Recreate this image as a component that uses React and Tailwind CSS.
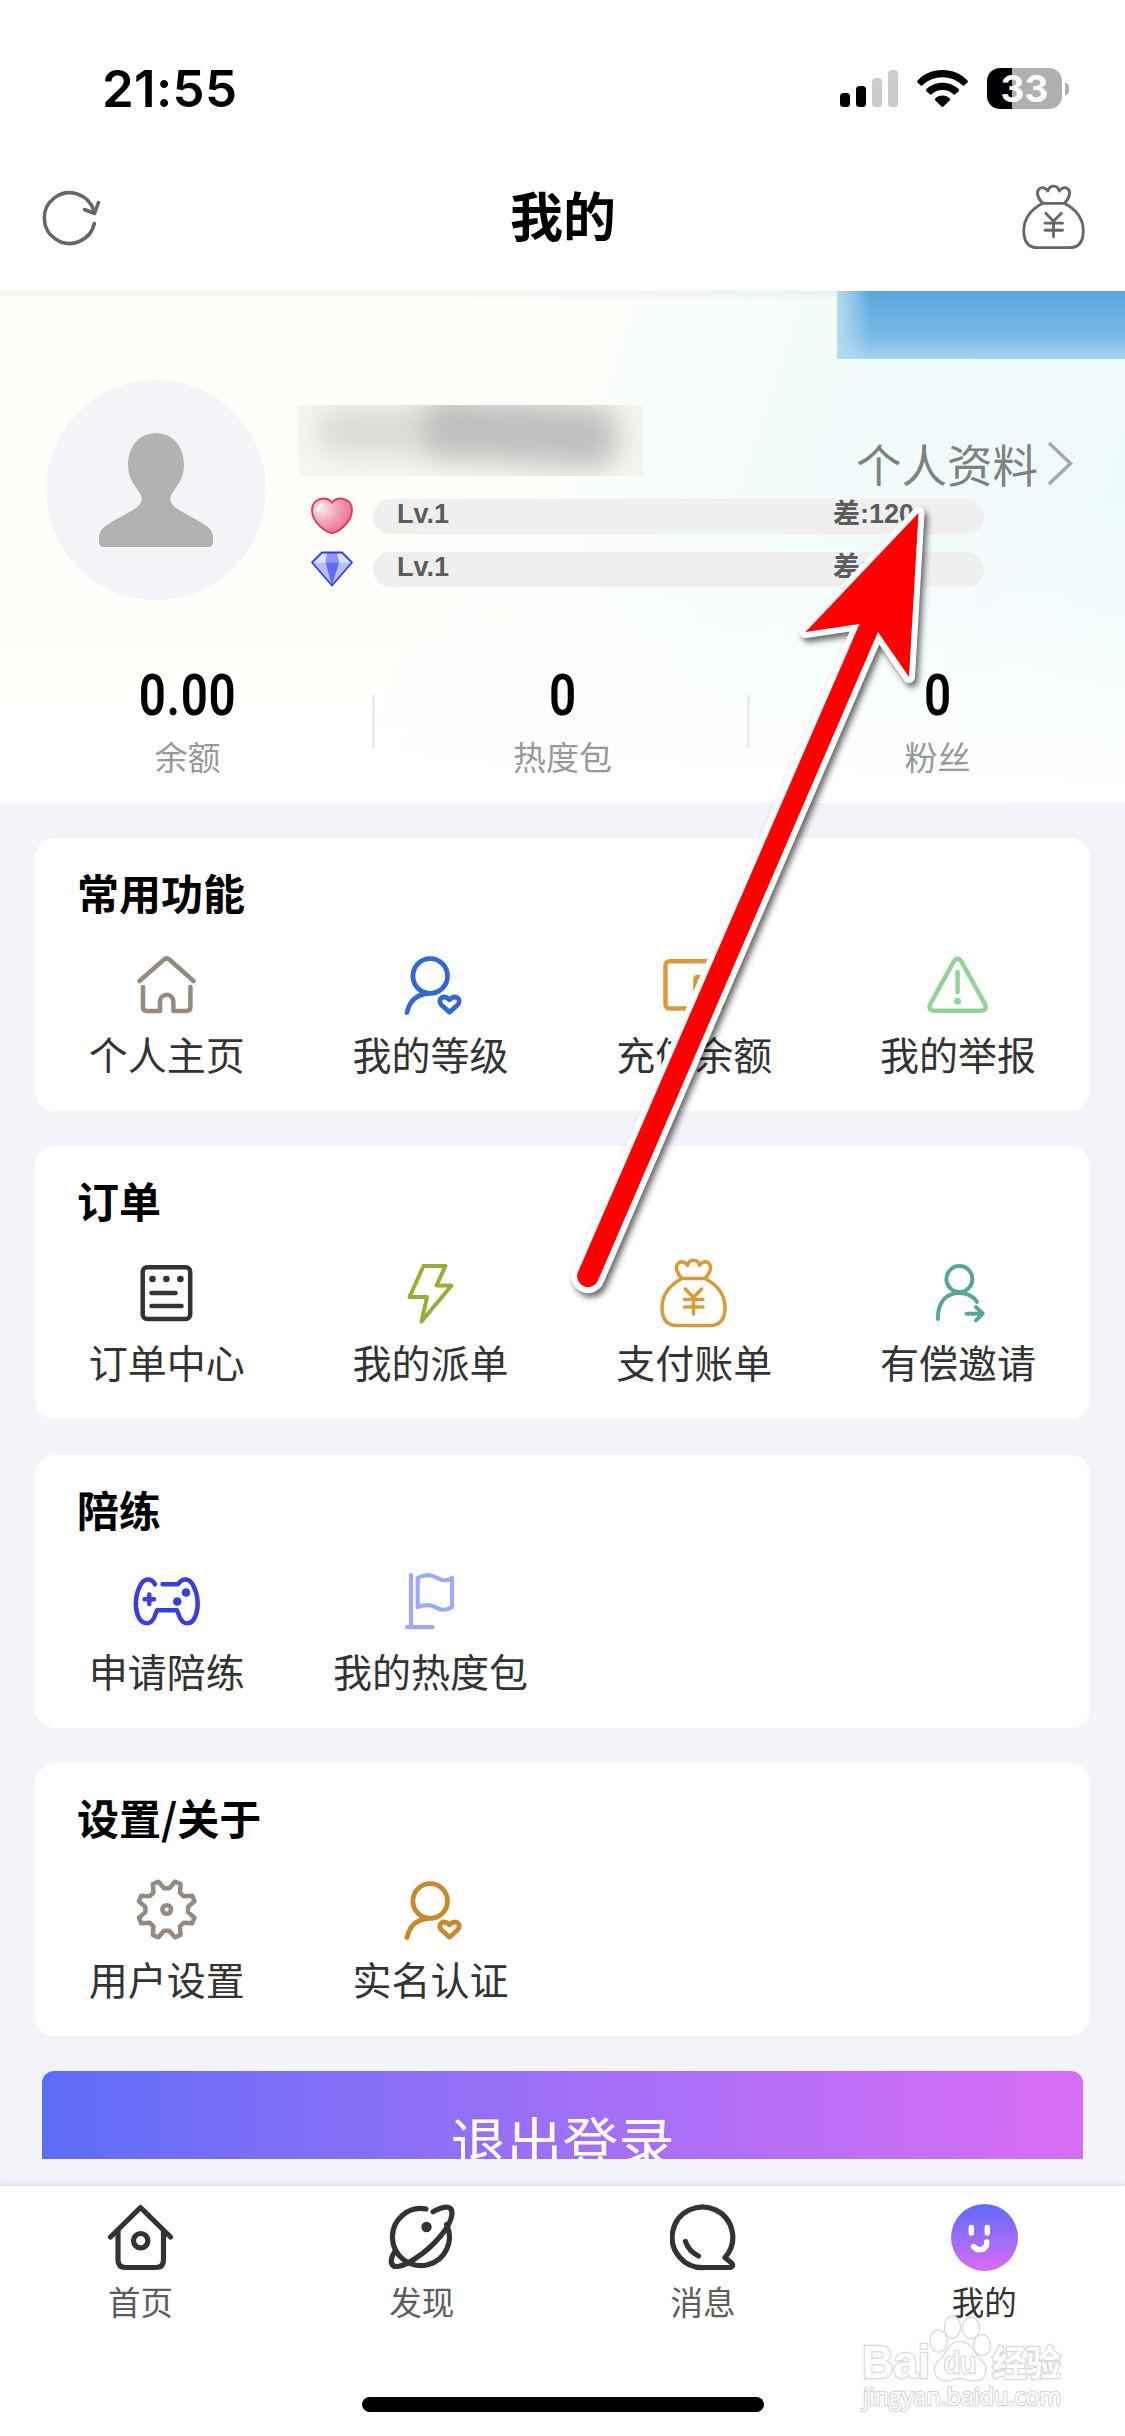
import clsx from "clsx";

const Icon = ({ children, color, width = 4.5 }) => (
  <svg
    viewBox="0 0 72 72"
    className="w-[72px] h-[72px]"
    fill="none"
    stroke={color}
    strokeWidth={width}
    strokeLinecap="round"
    strokeLinejoin="round"
  >
    {children}
  </svg>
);

const HouseIcon = () => (
  <Icon color="#948a80">
    <path d="M8.5 32 33 10.5q2.7-2.2 5.4 0L62.5 32" />
    <path d="M12 38V58q0 4 4 4h13V52.500a6.700 6.700 0 0 1 13.400 0v9.500h13q4 0 4-4V38" />
  </Icon>
);

const UserHeartIcon = ({ color }) => (
  <Icon color={color} width={4.8}>
    <circle cx="35.2" cy="27" r="17.3" />
    <path d="M12 63.5C14.5 52.5 21.5 45.5 33 44.7" />
    <path d="M54.500 63.300 46.500 56C41.500 50 48.500 45 54.500 50.800C60.500 45 67.500 50 62.500 56Z" />
  </Icon>
);

const WalletIcon = () => (
  <Icon color="#d99a3a">
    <rect x="7.5" y="12.2" width="56.5" height="47.3" rx="4" />
    <rect x="37.5" y="28" width="26.5" height="15" rx="2" />
  </Icon>
);

const WarningIcon = () => (
  <Icon color="#93d29b">
    <path d="M32 12.2q3.6-5 7.2 0L63.2 55.5q2 6.2-4.500 6.200H12.500Q6 61.700 8 55.500Z" />
    <path d="M35.600 23V43" />
    <circle cx="35.600" cy="52.200" r="3.400" fill="#93d29b" stroke="none" />
  </Icon>
);

const OrderIcon = () => (
  <Icon color="#333333">
    <rect x="11.7" y="10.3" width="47.500" height="51.800" rx="4.500" />
    <path d="M20.500 36H44.500M20.500 49H50.500" />
    <g fill="#333333" stroke="none">
      <circle cx="21.500" cy="22" r="3.300" />
      <circle cx="35.400" cy="22" r="3.300" />
      <circle cx="49.400" cy="22" r="3.300" />
    </g>
  </Icon>
);

const BoltIcon = () => (
  <Icon color="#9dab38" width={4}>
    <path d="M28.5 9H50.500L41.500 28.500H56.500L26.500 64.500L32 40H14.500Z" />
  </Icon>
);

const BagIcon = ({ color, width = 3.5 }) => (
  <Icon color={color} width={width}>
    <path d="M24 21.500C10 29 4 39 4 50.500C4 62 9 68.500 19 68.500H52C62 68.500 67 62 67 50.500C67 39 61 29 47 21.500Z" />
    <path d="M24 21.500C17.500 14.500 17.500 9 20 6.500C23 3.500 27.500 5 29.500 8.500C31 1.500 40 1.500 41.500 8.500C43.500 5 48 3.500 51 6.500C53.500 9 53.500 14.500 47 21.500" />
    <path d="M27.300 32 35.500 40.500 43.700 32M26.500 42.500H45M26.500 50H45M35.500 41V57" />
  </Icon>
);

const InviteIcon = () => (
  <Icon color="#5aa59b" width={4}>
    <circle cx="37.400" cy="22" r="13" />
    <path d="M16 62C15.500 44 25 36 37.400 36C45 36 51 39 55 45" />
    <path d="M44.500 56.700H60.500M54 50 60.800 56.700 54 63.400" />
  </Icon>
);

const GamepadIcon = () => (
  <Icon color="#3a3fdc">
    <path d="M24 18.300C20.500 12 13.500 11.500 9.500 19C4.500 28 3.500 40 6.500 48.500C10.500 60 21 60.500 24.500 48L26 44.300H46L47.500 48C51 60.500 61.500 60 65 48.500C68 40 67 28 62 19C58 11.500 51 12 47 18.300H31.500" />
    <path d="M18.300 28.500V38M13.500 33.300H23" />
    <g fill="#3a3fdc" stroke="none">
      <circle cx="55" cy="26.500" r="4.300" />
      <circle cx="46.300" cy="35.500" r="4.300" />
    </g>
  </Icon>
);

const FlagIcon = () => (
  <Icon color="#9fa9f9" width={4.2}>
    <path d="M16 9V61M12 61.200H37.500" />
    <path d="M22.700 12C29 8.500 36 8.500 42 11.800S52 15.300 57 12V41C52 44.300 48 45.100 42 41.800S29 38.500 22.700 41Z" />
  </Icon>
);

const polar = (deg, r) => {
  const a = (deg * Math.PI) / 180;
  return `${(35.7 + r * Math.sin(a)).toFixed(2)} ${(35.5 - r * Math.cos(a)).toFixed(2)}`;
};

const gearPoints = Array.from({ length: 8 }, (_, i) => i * 45).flatMap((deg) => [
  polar(deg - 7, 21.5),
  polar(deg + 7, 21.5),
  polar(deg + 16.5, 29),
  polar(deg + 28.5, 29),
]);

const GearIcon = () => (
  <Icon color="#948a80">
    <path d={`M${gearPoints.join("L")}Z`} />
    <circle cx="35.700" cy="35.500" r="4.300" />
  </Icon>
);

const sections = [
  {
    title: "常用功能",
    items: [
      { label: "个人主页", icon: <HouseIcon /> },
      { label: "我的等级", icon: <UserHeartIcon color="#3268cf" /> },
      { label: "充值余额", icon: <WalletIcon /> },
      { label: "我的举报", icon: <WarningIcon /> },
    ],
  },
  {
    title: "订单",
    items: [
      { label: "订单中心", icon: <OrderIcon /> },
      { label: "我的派单", icon: <BoltIcon /> },
      { label: "支付账单", icon: <BagIcon color="#d99a3a" /> },
      { label: "有偿邀请", icon: <InviteIcon /> },
    ],
  },
  {
    title: "陪练",
    items: [
      { label: "申请陪练", icon: <GamepadIcon /> },
      { label: "我的热度包", icon: <FlagIcon /> },
    ],
  },
  {
    title: "设置/关于",
    items: [
      { label: "用户设置", icon: <GearIcon /> },
      { label: "实名认证", icon: <UserHeartIcon color="#c58a2c" /> },
    ],
  },
];

const TabIcon = ({ children }) => (
  <svg
    viewBox="0 0 67 67"
    className="w-[67px] h-[67px]"
    fill="none"
    stroke="#333333"
    strokeWidth="5.2"
    strokeLinecap="round"
    strokeLinejoin="round"
  >
    {children}
  </svg>
);

const tabs = [
  {
    label: "首页",
    icon: (
      <TabIcon>
        <path d="M3.500 33 33.500 3.500 63.500 33" />
        <path d="M11 27V56q0 7.500 7.500 7.500H49q7.500 0 7.500-7.500V27" />
        <circle cx="33.700" cy="36.700" r="7.200" />
      </TabIcon>
    ),
  },
  {
    label: "发现",
    icon: (
      <TabIcon>
        <path d="M38 5A28.500 28.500 0 1 0 58.500 20.500" />
        <path d="M45 7.700C58.500 .500 65 2 63.800 11C62.500 23 45.500 43 26.500 55C14.500 63 5 65 3.500 59C2.500 55 4.500 51 7.500 46.500" />
        <circle cx="38.500" cy="23" r="5.200" fill="#333333" stroke="none" />
      </TabIcon>
    ),
  },
  {
    label: "消息",
    icon: (
      <TabIcon>
        <path d="M55 53.500A30.300 30.300 0 1 0 34.400 63.500H60q4.500-1.500 1.500-4.500Z" />
        <path d="M15.500 37.500Q18.500 47 28.500 52" />
      </TabIcon>
    ),
  },
  {
    label: "我的",
    active: true,
    icon: (
      <svg viewBox="0 0 67 67" className="w-[67px] h-[67px]" fill="none">
        <defs>
          <linearGradient id="face" x1="0" y1="0" x2="0" y2="1">
            <stop offset="0" stopColor="#5b6cf8" />
            <stop offset="1" stopColor="#d96cf5" />
          </linearGradient>
        </defs>
        <circle cx="33.5" cy="33.5" r="33.5" fill="url(#face)" />
        <g stroke="#ffffff" strokeWidth="5.400" strokeLinecap="round">
          <path d="M20.300 23.500V29M36.300 23.500V29" />
          <path d="M22.500 42.500C27 48 36 46 35.800 38" />
        </g>
      </svg>
    ),
  },
];

const StatusBar = () => (
  <div className="flex h-[150px] items-start justify-between pl-[102px] pr-[56px]">
    <span className="mt-[62px] font-['Inter'] text-[51px] leading-[54px] font-semibold tracking-[0.3px]">
      21:55
    </span>
    <div className="mt-[68px] flex items-start">
      <svg viewBox="0 0 58 37" className="mt-[2px] h-[37px] w-[58px]">
        <rect y="23" width="10" height="14" rx="3.5" />
        <rect x="16" y="16" width="10" height="21" rx="3.5" />
        <rect x="32" y="8" width="10" height="29" rx="3.5" fill="#cccccc" />
        <rect x="48" width="10" height="37" rx="3.5" fill="#cccccc" />
      </svg>
      <svg viewBox="0 0 51 37" className="mt-[2px] ml-[19px] h-[37px] w-[51px]">
        <path d="M25.500 0C35.500 0 44.500 4 50.500 10.500Q51.200 11.500 50.500 12.500L47.200 15.500Q46.300 16 45.500 15.200C40 10 33 7.200 25.500 7.200S11 10 5.500 15.200Q4.700 16 3.800 15.500L.500 12.500Q-.200 11.500 .500 10.500C6.500 4 15.500 0 25.500 0Z" />
        <path d="M25.500 12.800C32 12.800 37.500 15.200 41.700 19.300Q42.500 20.200 41.700 21.200L38.200 24.300Q37.300 25 36.400 24.200C33.500 21.500 29.700 20 25.500 20S17.500 21.500 14.600 24.200Q13.700 25 12.800 24.300L9.300 21.200Q8.500 20.200 9.300 19.300C13.500 15.200 19 12.800 25.500 12.800Z" />
        <path d="M25.500 25.600C28.500 25.600 31 26.700 32.800 28.500Q33.500 29.400 32.800 30.300L26.500 36.500Q25.500 37.300 24.500 36.500L18.200 30.300Q17.500 29.400 18.200 28.500C20 26.700 22.500 25.600 25.500 25.600Z" />
      </svg>
      <div className="ml-[19px] flex h-[41px] w-[75px] items-center justify-center rounded-[13px] bg-linear-to-r from-black from-[33%] to-[#b0b0b0] to-[33%]">
        <span className="font-['Inter'] text-[37px] leading-none font-bold text-white">33</span>
      </div>
      <div className="mt-[15px] ml-[3px] h-[12px] w-[4px] rounded-r-full bg-[#b0b0b0]" />
    </div>
  </div>
);

const NavBar = () => (
  <div className="flex h-[141px] items-start justify-between pr-[37px] pl-[41px]">
    <svg
      viewBox="0 0 62 62"
      className="mt-[37px] h-[62px] w-[62px]"
      fill="none"
      stroke="#666666"
      strokeWidth="3.600"
      strokeLinecap="round"
      strokeLinejoin="round"
    >
      <path d="M53.300 36.500A25.300 25.300 0 1 1 53 24.500" />
      <path d="M43.500 22.500 53.500 26.500 57.500 15.500" />
    </svg>
    <h1 className="mt-[26px] ml-[3px] text-[53px] leading-[76px] font-bold">我的</h1>
    <div className="mt-[33px] [&>svg]:h-[68px] [&>svg]:w-[68px]">
      <BagIcon color="#666666" width={3} />
    </div>
  </div>
);

const LevelBar = ({ icon }) => (
  <div className="flex items-center">
    {icon}
    <div className="ml-[19px] flex h-[35px] w-[611px] items-start justify-between rounded-full bg-[#efefef] pr-[70px] pl-[24px] font-['Liberation_Sans','Noto_Sans_CJK_SC',sans-serif] text-[27px] leading-[31px] font-bold text-[#5c5c5c]">
      <span>Lv.1</span>
      <span>差:120</span>
    </div>
  </div>
);

const HeartBadge = () => (
  <svg viewBox="0 0 44 38" className="h-[38px] w-[44px]">
    <defs>
      <radialGradient id="heart" cx="0.25" cy="0.3" r="0.8">
        <stop offset="0" stopColor="#fbe3ea" />
        <stop offset="0.5" stopColor="#f2a3b8" />
        <stop offset="1" stopColor="#ee6a90" />
      </radialGradient>
    </defs>
    <path
      d="M22 36C18 36 2 27 2 13C2 1 16 -1.500 22 5.500C28 -1.500 42 1 42 13C42 27 26 36 22 36Z"
      fill="url(#heart)"
      stroke="#dc3a5e"
      strokeWidth="1.800"
    />
    <path d="M8 13Q8.500 9 12 7.500" stroke="#ffffff" strokeWidth="3" strokeLinecap="round" fill="none" />
  </svg>
);

const DiamondBadge = () => (
  <svg viewBox="0 0 44 38" className="h-[38px] w-[44px]">
    <path d="M12 2.500H32L42 12.500L22 35.500L2 12.500Z" fill="#b9bffb" />
    <path d="M12 2.500H18L15.500 12.500H2ZM32 2.500H27L29 12.500H42Z" fill="#dfe2ff" />
    <path d="M17 2.500H27L29 12.500H15.500Z" fill="#8e97f8" />
    <path d="M15.500 12.500H29L22 35.500Z" fill="#5f6af5" />
    <path
      d="M12 2.500H32L42 12.500L22 35.500L2 12.500Z"
      fill="none"
      stroke="#2f3ff0"
      strokeWidth="1.800"
      strokeLinejoin="round"
    />
  </svg>
);

const stats = [
  { value: "0.00", label: "余额" },
  { value: "0", label: "热度包" },
  { value: "0", label: "粉丝" },
];

const Profile = () => (
  <section className="relative h-[512px] shrink-0 bg-[linear-gradient(to_bottom,#0000000d,transparent_8px),linear-gradient(to_top,#fffffe,#fffffe00_60%),linear-gradient(108deg,#fffef9_36%,#f7fcf8_55%,#f1fcfc_70%,#f0f9fc_84%,#e9fbfa)]">
    <div className="absolute top-0 right-0 h-[68px] w-[288px] bg-[linear-gradient(to_right,#b5dcf0,transparent_34px),linear-gradient(to_top,#a6d3ef,#7bbae5_22px,#57a6db)]" />

    <div className="flex pt-[89px] pl-[46px]">
      <div className="flex h-[220px] w-[220px] items-center justify-center rounded-full bg-[#f3f4f8]">
        <svg viewBox="0 0 114 114" className="-mt-px h-[114px] w-[114px]" fill="#b2b2b2">
          <path d="M57 0C74 0 85 14 85 32C85 45 78 53 74 59C69 67 71 71 80 77C90 83 103 89 110 95Q114 99 114 104V109Q114 114 109 114H5Q0 114 0 109V104Q0 99 4 95C11 89 24 83 34 77C43 71 45 67 40 59C36 53 29 45 29 32C29 14 40 0 57 0Z" />
        </svg>
      </div>

      <div className="ml-[32px] flex flex-col pt-[25px]">
        <div className="relative h-[71px] w-[345px] overflow-hidden bg-[#f1f2ed]/70">
          <div className="absolute top-[2px] left-[18px] h-[48px] w-[150px] rounded-full bg-[#dcdcd7] blur-[12px]" />
          <div className="absolute top-[-4px] left-[125px] h-[62px] w-[195px] rotate-4 rounded-3xl bg-[#bfc0be] blur-[14px]" />
        </div>
        <div className="mt-[21px] ml-[12px] flex flex-col gap-[15px]">
          <LevelBar icon={<HeartBadge />} />
          <LevelBar icon={<DiamondBadge />} />
        </div>
      </div>

      <div className="mt-[53px] -ml-[128px] flex h-[60px] w-[230px] items-center">
        <span className="text-[45.5px] leading-[60px] whitespace-nowrap text-[#808080]">个人资料</span>
        <svg viewBox="0 0 28 44" className="ml-[9px] h-[44px] w-[28px] shrink-0" fill="none" stroke="#a8a8a8" strokeWidth="3.5">
          <path d="M2 2 23.500 22.500 2 43" />
        </svg>
      </div>
    </div>

    <div className="mt-[62px] flex">
      {stats.map(({ value, label }, index) => (
        <div key={label} className="relative flex flex-1 flex-col items-center">
          <span className="scale-x-82 font-['Roboto'] text-[58px] leading-[67px] font-semibold tracking-[0.8px]">
            {value}
          </span>
          <span className="mt-[3px] text-[33px] leading-[48px] text-[#999999]">{label}</span>
          {index < 2 && <i className="absolute top-[33px] right-0 h-[53px] w-[3px] bg-[#ebebec]" />}
        </div>
      ))}
    </div>
  </section>
);

const Section = ({ title, items }) => (
  <section className="h-[273px] shrink-0 rounded-[20px] bg-white">
    <h2 className="pt-[24px] pl-[42px] text-[42px] leading-[60px] font-bold">{title}</h2>
    <div className="mt-[27px] grid grid-cols-4">
      {items.map(({ label, icon }) => (
        <div key={label} className="flex flex-col items-center">
          {icon}
          <span className="mt-[4px] text-[39px] leading-[56px] text-[#333333]">{label}</span>
        </div>
      ))}
    </div>
  </section>
);

const TabBar = () => (
  <nav className="relative flex h-[250px] shrink-0 flex-col items-center bg-white shadow-[0_-2px_6px_rgba(0,0,0,0.1)]">
    <div className="flex w-full pt-[18px]">
      {tabs.map(({ label, icon, active }) => (
        <div key={label} className="flex flex-1 flex-col items-center">
          {icon}
          <span
            className={clsx(
              "mt-[6px] text-[32.5px] leading-[48px]",
              active ? "text-[#333333]" : "text-[#5c5c5c]"
            )}
          >
            {label}
          </span>
        </div>
      ))}
    </div>
    <div className="mt-[72px] h-[15px] w-[402px] rounded-full bg-black" />
  </nav>
);

const Watermark = () => (
  <svg
    viewBox="0 0 210 106"
    className="absolute top-[2312px] left-[859px] h-[106px] w-[210px]"
    fill="#ffffff"
    stroke="#d8d8d8"
    strokeWidth="2.5"
    paintOrder="stroke"
    fontFamily="Liberation Sans, Noto Sans CJK SC, sans-serif"
  >
    <text x="3" y="66" fontSize="46" fontWeight="700" textLength="68" lengthAdjust="spacingAndGlyphs">
      Bai
    </text>
    <ellipse cx="79.500" cy="29" rx="8" ry="10.500" />
    <ellipse cx="93.500" cy="15" rx="7.500" ry="10.500" />
    <ellipse cx="112" cy="16" rx="8" ry="10" />
    <ellipse cx="123" cy="33" rx="8" ry="10" />
    <path d="M101 30C112 30 115 42 121 48C131 58 126 68 116 68C109 69 107 66 101 66S92 69 85 68C75 67 73 56 81 48C88 42 90 30 101 30Z" />
    <text x="85" y="61" fontSize="29" textLength="32" lengthAdjust="spacingAndGlyphs">
      du
    </text>
    <text x="133" y="64" fontSize="35" fontWeight="700" textLength="69">
      经验
    </text>
    <text x="4" y="93" fontSize="24" textLength="198" fontFamily="Open Sans, sans-serif" lengthAdjust="spacingAndGlyphs">
      jingyan.baidu.com
    </text>
  </svg>
);

// Pointer from the order card up to the profile link
const Pointer = () => (
  <svg
    viewBox="0 0 380 820"
    className="absolute top-[490px] left-[560px] h-[820px] w-[380px] drop-shadow-[3px_4px_3px_rgba(0,0,0,0.6)]"
    strokeLinejoin="round"
  >
    <path
      d="M358.500 23 245.500 142 299.500 134 18 782A10.800 10.800 0 0 0 38 790.500L318 142 349 187Z"
      fill="#ff0000"
      stroke="#ffffff"
      strokeWidth="12"
      paintOrder="stroke"
    />
  </svg>
);

const App = () => {
  return (
    <div className="relative flex h-[2436px] w-[1125px] flex-col overflow-hidden bg-[#f3f4f9] font-['Noto_Sans_CJK_SC',sans-serif] text-black">
      <header className="h-[291px] shrink-0 bg-white">
        <StatusBar />
        <NavBar />
      </header>

      <Profile />

      <main className="flex h-[1356px] shrink-0 flex-col gap-[35.3px] overflow-hidden px-[35px] pt-[35px]">
        {sections.map((section) => (
          <Section key={section.title} {...section} />
        ))}
        <button className="mx-[7px] h-[137px] shrink-0 rounded-[12px] bg-linear-to-r from-[#5c6cf7] to-[#d96cf5] text-[56px] text-white">
          退出登录
        </button>
      </main>

      <div className="h-[27px] shrink-0" />
      <TabBar />

      <Pointer />
      <Watermark />
    </div>
  );
};

export default App;
